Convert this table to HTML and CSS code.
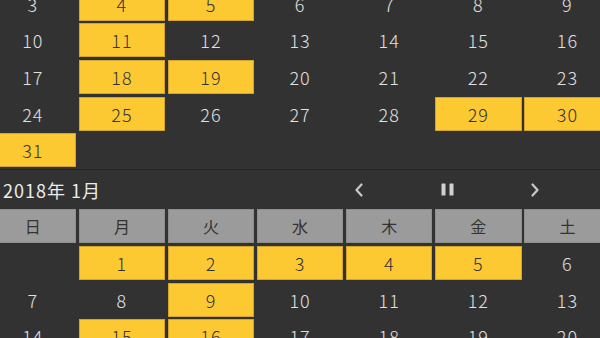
FILE: index.html
```html
<!DOCTYPE html>
<html lang="ja">
<head>
<meta charset="utf-8">
<title>カレンダー</title>
<link rel="stylesheet" href="styles.css">
</head>
<body>
<div class="viewport">
  <div class="grid grid-prev">
    <div class="cell">3</div><div class="cell on">4</div><div class="cell on">5</div><div class="cell">6</div><div class="cell">7</div><div class="cell">8</div><div class="cell">9</div>
    <div class="cell">10</div><div class="cell on">11</div><div class="cell">12</div><div class="cell">13</div><div class="cell">14</div><div class="cell">15</div><div class="cell">16</div>
    <div class="cell">17</div><div class="cell on">18</div><div class="cell on">19</div><div class="cell">20</div><div class="cell">21</div><div class="cell">22</div><div class="cell">23</div>
    <div class="cell">24</div><div class="cell on">25</div><div class="cell">26</div><div class="cell">27</div><div class="cell">28</div><div class="cell on">29</div><div class="cell on">30</div>
    <div class="cell on">31</div>
  </div>
  <div class="sep"></div>
  <div class="month-head">
    <div class="title">2018年 1月</div>
    <div class="nav">
      <span class="btn">
        <svg width="10" height="14" viewBox="0 0 10 14"><path d="M7.5 1.5 L2.5 7 L7.5 12.5" fill="none" stroke="#c8c8c8" stroke-width="2.2" stroke-linecap="round" stroke-linejoin="round"/></svg>
      </span>
      <span class="btn">
        <svg width="13" height="13" viewBox="0 0 13 13"><rect x="0.5" y="0.5" width="4" height="12" rx="0.6" fill="#d0d0d0"/><rect x="8.5" y="0.5" width="4" height="12" rx="0.6" fill="#d0d0d0"/></svg>
      </span>
      <span class="btn">
        <svg width="10" height="14" viewBox="0 0 10 14"><path d="M2.5 1.5 L7.5 7 L2.5 12.5" fill="none" stroke="#c8c8c8" stroke-width="2.2" stroke-linecap="round" stroke-linejoin="round"/></svg>
      </span>
    </div>
  </div>
  <div class="grid grid-cur">
    <div class="cell head">日</div><div class="cell head">月</div><div class="cell head">火</div><div class="cell head">水</div><div class="cell head">木</div><div class="cell head">金</div><div class="cell head">土</div>
    <div class="cell"></div><div class="cell on">1</div><div class="cell on">2</div><div class="cell on">3</div><div class="cell on">4</div><div class="cell on">5</div><div class="cell">6</div>
    <div class="cell">7</div><div class="cell">8</div><div class="cell on">9</div><div class="cell">10</div><div class="cell">11</div><div class="cell">12</div><div class="cell">13</div>
    <div class="cell">14</div><div class="cell on">15</div><div class="cell on">16</div><div class="cell">17</div><div class="cell">18</div><div class="cell">19</div><div class="cell">20</div>
  </div>
</div>
</body>
</html>
```
FILE: styles.css
```css
html, body {
  margin: 0;
  padding: 0;
  background: #323232;
}
body {
  font-family: "Noto Sans CJK JP", "Noto Sans", sans-serif;
  color: #e6e6e6;
}
.viewport {
  width: 600px;
  height: 338px;
  overflow: hidden;
  background: #323232;
}
.grid {
  display: grid;
  grid-template-columns: repeat(7, 1fr);
  grid-auto-rows: 34px;
  gap: 2.7px;
  width: 621px;
  margin-left: -10.4px;
}
.grid-prev {
  margin-top: -13.3px;
}
.cell {
  display: flex;
  align-items: center;
  justify-content: center;
  font-size: 18px;
  font-weight: 300;
  letter-spacing: 1px;
  line-height: 1;
  color: #e0e0e0;
  box-sizing: border-box;
}
.cell.on {
  background: #fdc933;
  border: 1px solid #d3a52c;
  color: #333333;
}
.cell.head {
  background: #9b9b9b;
  border: 1px solid #8e8e8e;
  color: #333333;
  font-size: 16px;
  letter-spacing: 0;
  font-weight: 400;
}
.sep {
  height: 1px;
  margin-top: 2px;
  background: #262626;
}
.month-head {
  height: 38.8px;
  display: flex;
  align-items: center;
}
.title {
  padding-left: 3px;
  font-size: 18px;
  letter-spacing: 1px;
  color: #ececec;
  width: 310px;
}
.nav {
  display: flex;
  align-items: center;
  margin-left: 2px;
}
.btn {
  width: 88px;
  display: flex;
  justify-content: center;
  align-items: center;
}
```
